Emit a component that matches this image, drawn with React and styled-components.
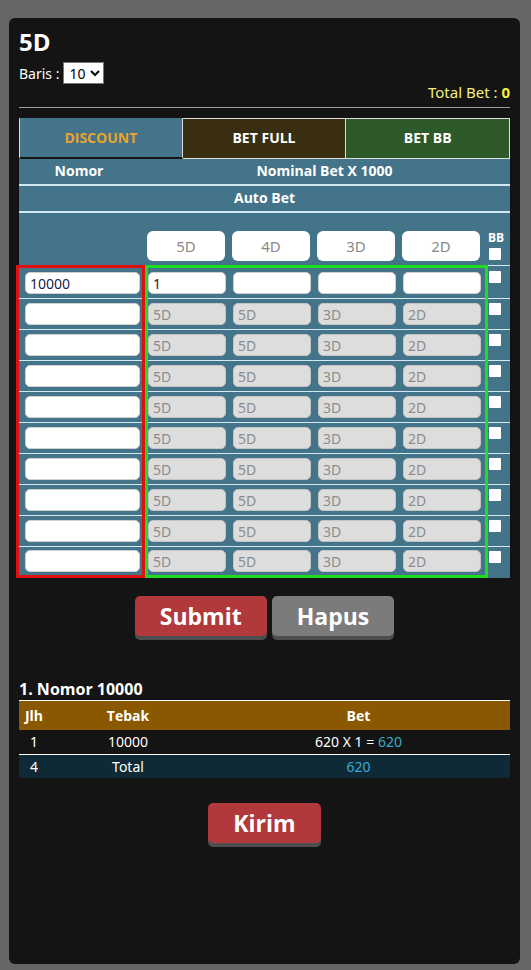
import React from 'react';
import styled, { createGlobalStyle } from 'styled-components';

const GlobalStyle = createGlobalStyle`
  html, body {
    margin: 0;
    background: #666666;
  }
  body {
    font-family: "Noto Sans", "Open Sans", sans-serif;
    color: #ffffff;
  }
  * {
    box-sizing: border-box;
  }
`;

const TEAL = '#44748a';
const LINE = '#d3e9f1';

const Panel = styled.div`
  margin: 18px 11px 0 9px;
  height: 946px;
  background: #141414;
  border-radius: 6px;
  padding: 10px 10px 0;
`;

const Title = styled.h1`
  margin: 0;
  font-family: "Open Sans", sans-serif;
  font-size: 24px;
  font-weight: 700;
  line-height: 28px;
`;

const BarisRow = styled.div`
  display: flex;
  align-items: center;
  gap: 4px;
  margin-top: 6px;
  height: 22px;
  font-size: 14px;
`;

const Select = styled.select`
  height: 22px;
  font-family: "Noto Sans", sans-serif;
  font-size: 14px;
  background: #fff;
  color: #000;
  border: 1px solid #767676;
  border-radius: 0;
  padding: 0 1px;
`;

const TotalBet = styled.div`
  text-align: right;
  font-size: 15px;
  line-height: 16px;
  color: #f4f07a;
  b {
    color: #f6f23a;
  }
`;

const Rule = styled.hr`
  margin: 7px 0 0;
  border: 0;
  border-top: 1px solid #9a9a9a;
`;

const Tabs = styled.div`
  display: grid;
  grid-template-columns: repeat(3, 1fr);
  margin-top: 10px;
  height: 41px;
`;

const Tab = styled.div`
  display: flex;
  align-items: center;
  justify-content: center;
  padding-bottom: 2px;
  font-family: "Open Sans", sans-serif;
  font-weight: 700;
  font-size: 14px;
  background: ${(p) => p.$bg};
  color: ${(p) => (p.$active ? '#e8a52a' : '#ffffff')};
  border: 1px solid #dddddd;
  border-top-color: ${(p) => (p.$active ? p.$bg : '#dddddd')};
  border-bottom: ${(p) => (p.$active ? '2px solid #151515' : '1px solid #dddddd')};
  & + & {
    border-left: 0;
  }
`;

const HeadRow = styled.div`
  display: grid;
  grid-template-columns: ${(p) => p.$cols || '1fr'};
  height: 27px;
  background: ${TEAL};
  border-bottom: 2px solid ${LINE};
  font-family: "Open Sans", sans-serif;
  font-weight: 700;
  font-size: 14px;
  line-height: 24px;
  text-align: center;
`;

const ColumnsRow = styled.div`
  display: flex;
  background: ${TEAL};
  height: 52px;
  padding-top: 18px;
`;

const Spacer = styled.div`
  width: 128px;
`;

const HeadBets = styled.div`
  display: flex;
  gap: 7px;
  width: 341px;
`;

const HeadInput = styled.input`
  width: 78px;
  height: 30px;
  border: 0;
  border-radius: 6px;
  background: #fff;
  text-align: center;
  font-family: "Noto Sans", sans-serif;
  font-size: 15px;
  &::placeholder {
    color: #8a8a8a;
  }
`;

const BBHead = styled.div`
  width: 22px;
  margin-top: 0;
  font-family: "Open Sans", sans-serif;
  font-weight: 700;
  font-size: 12px;
  line-height: 14px;
  display: flex;
  flex-direction: column;
  align-items: flex-start;
  gap: 3px;
`;

const Check = styled.input.attrs({ type: 'checkbox' })`
  appearance: none;
  display: block;
  margin: 0 0 0 1px;
  width: 12px;
  height: 12px;
  background: #fff;
  border-radius: 1px;
`;

const Body = styled.div`
  display: flex;
  margin-left: -3px;
  background: ${TEAL};
`;

const Box = styled.div`
  width: ${(p) => p.$w}px;
  border: 3px solid ${(p) => p.$color};
`;

const Cell = styled.div`
  display: flex;
  align-items: center;
  gap: 7px;
  height: 31px;
  padding: ${(p) => p.$pad || '0'};
  border-bottom: 1px solid ${LINE};
  &:last-child {
    height: 28px;
    border-bottom: 0;
  }
`;

const Field = styled.input`
  width: ${(p) => p.$w}px;
  height: 22px;
  border: 1px solid ${(p) => (p.disabled ? '#c4c4c4' : '#d0d0d0')};
  border-radius: 5px;
  background: ${(p) => (p.disabled ? '#dddddd' : '#ffffff')};
  padding: 0 4px;
  font-family: "Noto Sans", sans-serif;
  font-size: 14px;
  color: ${(p) => p.$ink || '#222'};
  &::placeholder {
    color: #8c8c8c;
  }
`;

const BBCol = styled.div`
  width: 22px;
`;

const BBCell = styled.div`
  height: 31px;
  padding-top: 4px;
  border-top: 1px solid ${LINE};
  &:first-child {
    height: 33px;
    padding-top: 5px;
  }
`;

const Buttons = styled.div`
  display: flex;
  justify-content: center;
  gap: 5px;
  margin-top: 18px;
`;

const Button = styled.button`
  height: 40px;
  padding: 0 25px;
  border: 0;
  border-radius: 5px;
  background: ${(p) => (p.$gray ? '#7b7b7b' : '#b1393c')};
  box-shadow: 0 4px 0 #4e4e4e;
  color: #fff;
  font-family: "Open Sans", sans-serif;
  font-weight: 700;
  font-size: 23px;
  line-height: 40px;
`;

const ResultTitle = styled.div`
  margin-top: 43px;
  font-family: "Open Sans", sans-serif;
  font-weight: 700;
  font-size: 16px;
  line-height: 20px;
`;

const Result = styled.table`
  width: 100%;
  margin-top: 1px;
  border-collapse: collapse;
  border-top: 1px solid #fff;
  font-size: 14px;
  th,
  td {
    padding: 0;
    text-align: center;
  }
  th {
    height: 29px;
    background: #8a5800;
    font-family: "Open Sans", sans-serif;
    font-weight: 700;
    font-size: 14px;
  }
  td {
    height: 25px;
  }
  tr + tr {
    border-top: 1px solid #fff;
  }
`;

const TotalRow = styled.tr`
  background: #0f2a36;
  td {
    height: 23px;
  }
`;

const Blue = styled.span`
  color: #3aabd2;
`;

const Footer = styled.div`
  display: flex;
  justify-content: center;
  margin-top: 25px;
`;

const rows = Array.from({ length: 10 }, (_, i) => i);

export default function App() {
  return (
    <>
      <GlobalStyle />
      <Panel>
        <Title>5D</Title>
        <BarisRow>
          Baris :
          <Select defaultValue="10">
            <option value="10">10</option>
            <option value="20">20</option>
          </Select>
        </BarisRow>
        <TotalBet>
          Total Bet : <b>0</b>
        </TotalBet>
        <Rule />

        <Tabs>
          <Tab $bg={TEAL} $active>DISCOUNT</Tab>
          <Tab $bg="#3a2e12">BET FULL</Tab>
          <Tab $bg="#2e5a2b">BET BB</Tab>
        </Tabs>
        <HeadRow $cols="120px 1fr">
          <span>Nomor</span>
          <span>Nominal Bet X 1000</span>
        </HeadRow>
        <HeadRow>Auto Bet</HeadRow>

        <ColumnsRow>
          <Spacer />
          <HeadBets>
            {['5D', '4D', '3D', '2D'].map((d) => (
              <HeadInput key={d} placeholder={d} />
            ))}
          </HeadBets>
          <BBHead>
            BB
            <Check />
          </BBHead>
        </ColumnsRow>

        <Body>
          <Box $w={129} $color="#e01010">
            {rows.map((i) => (
              <Cell key={i} $pad="0 0 0 6px">
                <Field $w={115} $ink="#1c1c4e" defaultValue={i === 0 ? '10000' : ''} />
              </Cell>
            ))}
          </Box>
          <Box $w={343} $color="#1fdc1f">
            {rows.map((i) => (
              <Cell key={i}>
                {i === 0 ? (
                  <>
                    <Field $w={78} defaultValue="1" />
                    <Field $w={78} />
                    <Field $w={78} />
                    <Field $w={78} />
                  </>
                ) : (
                  ['5D', '5D', '3D', '2D'].map((d, k) => (
                    <Field key={k} $w={78} placeholder={d} disabled />
                  ))
                )}
              </Cell>
            ))}
          </Box>
          <BBCol>
            {rows.map((i) => (
              <BBCell key={i}>
                <Check />
              </BBCell>
            ))}
          </BBCol>
        </Body>

        <Buttons>
          <Button>Submit</Button>
          <Button $gray>Hapus</Button>
        </Buttons>

        <ResultTitle>1. Nomor 10000</ResultTitle>
        <Result>
          <colgroup>
            <col style={{ width: 30 }} />
            <col style={{ width: 158 }} />
            <col />
          </colgroup>
          <thead>
            <tr>
              <th>Jlh</th>
              <th>Tebak</th>
              <th>Bet</th>
            </tr>
          </thead>
          <tbody>
            <tr>
              <td>1</td>
              <td>10000</td>
              <td>
                620 X 1 = <Blue>620</Blue>
              </td>
            </tr>
            <TotalRow>
              <td>4</td>
              <td>Total</td>
              <td>
                <Blue>620</Blue>
              </td>
            </TotalRow>
          </tbody>
        </Result>

        <Footer>
          <Button>Kirim</Button>
        </Footer>
      </Panel>
    </>
  );
}
